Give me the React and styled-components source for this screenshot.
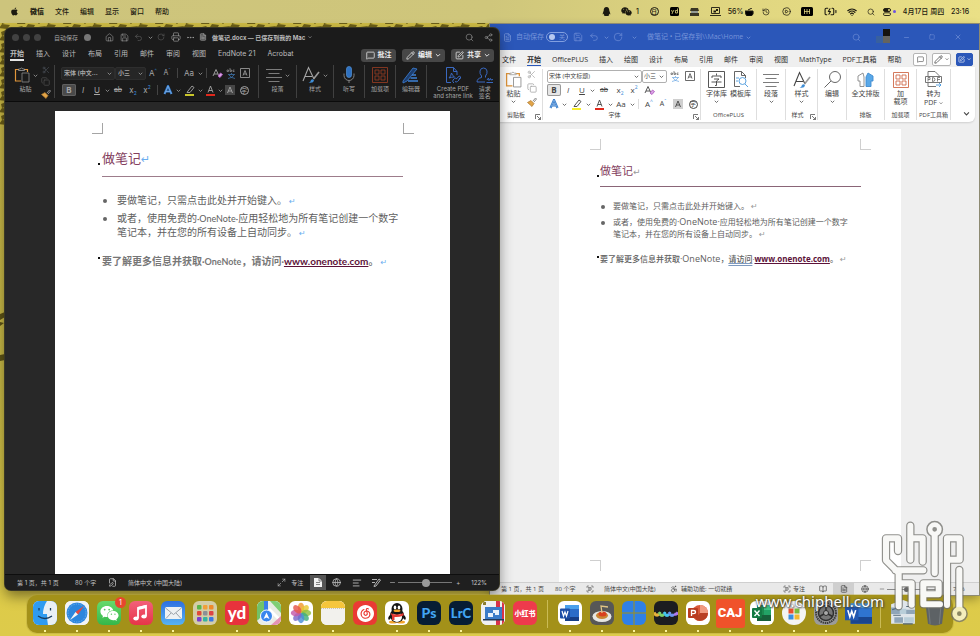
import React from 'react';
import styled, { createGlobalStyle, css } from 'styled-components';
import {
  House, Save, Undo2, RotateCw, Printer, Ellipsis, FileText, Search, Share2, MessageSquare, Pencil,
  Scissors, Copy, Globe, AlignLeft, Wifi, History, CirclePlay, BatteryCharging,
  Maximize2, SquarePen, BookOpen, Minus, Square, X, ScanText, Accessibility, FilePen,
} from 'lucide-react';
import { FaApple, FaQq, FaWeixin } from 'react-icons/fa';
import { SiNeteasecloudmusic } from 'react-icons/si';

const macFont = '"Inter", "Noto Sans CJK SC", sans-serif';
const winFont = '"Open Sans", "Noto Sans CJK SC", sans-serif';

const Global = createGlobalStyle`
  * { box-sizing: border-box; }
  body { margin: 0; font-family: ${macFont}; }
  button, select, input { font: inherit; color: inherit; margin: 0; padding: 0; border: 0; background: none; }
  svg { display: block; flex: none; }
`;

/* ---------- desktop ---------- */
const Desktop = styled.main`
  position: relative;
  min-height: 100vh;
  display: flex;
  flex-direction: column;
  justify-content: space-between;
  overflow: hidden;
  background: linear-gradient(180deg, #c9b84a 0%, #c8b945 60%, #decb48 92%, #ddcb4b 100%);
`;
const Wallpaper = styled.svg`
  position: absolute;
  inset: 0;
  width: 100%;
  height: 100%;
`;
const MenuBar = styled.header`
  position: relative;
  display: flex;
  align-items: center;
  justify-content: space-between;
  height: 23px;
  padding: 0 9px 0 10px;
  color: #1c1a10;
  background: linear-gradient(90deg, #cdc47c 0%, #cfc67b 50%, #e0d680 75%, #eae086 100%);
  font-size: 7px;
  font-weight: 500;
  line-height: 10px;
`;
const MenuList = styled.nav`
  display: flex;
  align-items: center;
  gap: 11px;
`;
const MenuItem = styled.button`
  white-space: nowrap;
  font-weight: ${(p) => (p.$strong ? 900 : 500)};
`;
const StatusIcons = styled.div`
  display: flex;
  align-items: center;
`;
const StatusSlot = styled.span`
  display: flex;
  align-items: center;
  justify-content: center;
  gap: 2px;
  width: ${(p) => p.$w || 20}px;
  white-space: nowrap;
`;

/* ---------- shared parts ---------- */
const Slot = styled.button`
  display: flex;
  align-items: center;
  justify-content: center;
  flex: none;
  width: ${(p) => p.$w || 14}px;
  height: 12px;
  border-radius: 2px;
  font-size: ${(p) => p.$size || 8}px;
  line-height: 10px;
  font-weight: ${(p) => (p.$bold ? 700 : 400)};
  ${(p) => p.$on && css`
    background: ${p.$on};
    box-shadow: inset 0 0 0 1px ${p.$edge};
  `}
`;
const Split = styled.span`
  flex: none;
  width: 1px;
  height: 10px;
  margin: 0 3px;
  background: ${(p) => p.$c};
`;
const Row = styled.div`
  display: flex;
  align-items: center;
  height: ${(p) => p.$h || 14}px;
  gap: ${(p) => p.$gap || 0}px;
`;
const Stack = styled.div`
  display: flex;
  flex-direction: column;
  align-items: center;
  gap: ${(p) => p.$gap || 0}px;
`;
const SelectBox = styled.span`
  display: flex;
  align-items: center;
  width: ${(p) => p.$w}px;
  height: 13px;
  padding: 0 2px 0 ${(p) => p.$pad || 1}px;
  background: ${(p) => p.$bg};
  border: 1px solid ${(p) => p.$edge};
  border-radius: 2px;
`;
const Picker = styled.select`
  appearance: none;
  flex: 1;
  min-width: 0;
  height: 10px;
  font-size: 6px;
  font-weight: ${(p) => (p.$bold ? 700 : 400)};
  line-height: 10px;
  outline: none;
`;
const Range = styled.input`
  appearance: none;
  width: ${(p) => p.$w}px;
  height: 10px;
  background: linear-gradient(${(p) => p.$track}, ${(p) => p.$track}) center / 100% 1px no-repeat;
  &::-webkit-slider-thumb {
    appearance: none;
    width: ${(p) => p.$thumb}px;
    height: ${(p) => p.$thumb}px;
    border-radius: 50%;
    background: ${(p) => p.$knob};
  }
`;

const Chevron = ({ s = 5 }) => (
  <svg width={s} height={s} viewBox="0 0 10 10" fill="none" stroke="currentColor" strokeWidth="1.5"><path d="M1.5 3.5 5 7l3.500-3.500" /></svg>
);
const ChevronSlot = ({ label }) => <Slot $w={6} aria-label={label}><Chevron /></Slot>;

const PasteIcon = ({ s = 16, paper }) => (
  <svg width={s} height={s} viewBox="0 0 16 16" fill="none">
    <path d="M5 2.500H1.500v11.500H7M10 2.500h3.500V5" stroke="#e0953a" strokeWidth="1.200" />
    <path d="M4.500 3.500V2h1.500q1.500-2 3 0h1.500v1.500z" stroke="#a0a0a0" strokeWidth=".8" />
    <path d="M8 6h7v9H8z" fill={paper} stroke="#8a8a8a" strokeWidth=".8" />
  </svg>
);
const BrushIcon = () => (
  <svg width="10" height="10" viewBox="0 0 10 10" fill="none">
    <path d="m6 4 2.500-3L9.500 2 7 5" stroke="#8d8d8d" />
    <path d="M4 3.500 7 6.500 5 9.500 .5 5.500z" fill="#e2a448" stroke="#a9752d" strokeWidth=".7" />
  </svg>
);
const LinesIcon = () => (
  <svg width="16" height="14" viewBox="0 0 16 14" stroke="currentColor" strokeWidth=".7"><path d="M0 1.500h16M2.500 5.500h11M0 9.500h16M2.500 13.500h11" /></svg>
);
const StyleIcon = () => (
  <svg width="18" height="18" viewBox="0 0 18 18" fill="none" stroke="currentColor" strokeWidth="1.100">
    <path d="M1 15 6.500 1.500 12 13M3 10.500h7" />
    <path d="M17 6 11.500 13" stroke="#9a9a9a" strokeWidth="1.600" />
    <path d="M6.500 16.500q2 0 2.500-2.500 2-1.500 3 .5-.500 3-5.500 2z" fill="#3f8ed6" stroke="none" />
  </svg>
);
const GridIcon = ({ c }) => (
  <svg width="16" height="16" viewBox="0 0 16 16" fill="none" stroke={c} strokeWidth=".9"><path d="M.5.5h15v15H.5z" /><path d="M3 3h4v4H3zM9 3h4v4H9zM3 9h4v4H3zM9 9h4v4H9z" /></svg>
);
const GlyphColor = ({ bar, children }) => (
  <svg width="11" height="11" viewBox="0 0 11 11" fill="none" stroke="currentColor" strokeWidth=".9">
    {children}
    <path d="M1 10h9" stroke={bar} strokeWidth="2" />
  </svg>
);
const FontColor = () => <GlyphColor bar="#e0281c"><path d="M3 7.500 5.500 1 8 7.500M3.800 5.500h3.400" /></GlyphColor>;
const Highlighter = ({ bar }) => <GlyphColor bar={bar}><path d="m4 6 4-5 2 1.500-4 5H3z" /></GlyphColor>;
const EffectA = () => (
  <svg width="10" height="10" viewBox="0 0 10 10" fill="none"><path d="M1.500 9 5 1l3.500 8M3 6.500h4" stroke="#3379c8" strokeWidth="2.200" /><path d="M1.500 9 5 1l3.500 8M3 6.500h4" stroke="#a9cdf2" strokeWidth=".5" /></svg>
);
const EraserA = () => (
  <svg width="11" height="11" viewBox="0 0 11 11" fill="none" stroke="currentColor" strokeWidth=".9"><path d="M1 8 4 1.500 7 8M2 6h4" /><path d="m6 8 2.500-3 2 1.500L8 9.500z" stroke="#b25cc4" fill="#d9a3e2" /></svg>
);
const BoxA = () => (
  <svg width="10" height="10" viewBox="0 0 10 10" fill="none" stroke="currentColor" strokeWidth=".8"><path d="M.5.5h9v9h-9zM3 7.500l2-5 2 5M3.600 6h2.800" /></svg>
);
const ShadeA = () => (
  <svg width="10" height="10" viewBox="0 0 10 10" fill="none"><path d="M0 0h10v10H0z" fill="#8886" /><path d="m2.500 8 2.500-6 2.500 6M3.400 6h3.200" stroke="currentColor" strokeWidth=".9" /></svg>
);
const Ringed = styled.span`
  width: 9px;
  height: 9px;
  border: 1px solid currentColor;
  border-radius: 50%;
  font-size: 6px;
  line-height: 7px;
  text-align: center;
`;
const Blue = styled.span`
  color: #3a88d8;
  font-size: 5px;
  align-self: ${(p) => (p.$low ? 'flex-end' : 'flex-start')};
  line-height: 6px;
`;
const Underlined = styled.u``;
const Struck = styled.s``;
const Phonetic = () => (
  <svg width="11" height="11" viewBox="0 0 11 11" fill="none" stroke="currentColor" strokeWidth=".6"><path d="M1 3.500V2h1.500v1.500H1M4 0v3.500h1.500V2H4M8.500 2H7v1.500h1.500" /><path d="M5.500 5v1M2 6.500h7M3 7q2 3 6 3.500M8 7q-2 3-6 3.500" stroke="#4a93dd" /></svg>
);

/* ---------- dark window ---------- */
const MacWindow = styled.section`
  position: absolute;
  z-index: 2;
  top: 28px;
  left: 5px;
  right: calc(50% - 9px);
  bottom: 46px;
  display: flex;
  flex-direction: column;
  overflow: hidden;
  border-radius: 6px;
  background: #1b1b1b;
  color: #bdbdbd;
  box-shadow: 0 0 0 1px #3a3826, 0 6px 14px #0007;
  font-family: ${macFont};
`;
const MacTitle = styled.div`
  display: flex;
  align-items: center;
  height: 18px;
  padding: 0 6px 0 7px;
  font-size: 6px;
  line-height: 9px;
  color: #a2a2a2;
  white-space: nowrap;
`;
const Light = styled.button`
  width: 7px;
  height: 7px;
  margin-right: 4px;
  border-radius: 50%;
  background: #414141;
`;
const AutoSave = styled.label`
  display: flex;
  align-items: center;
  gap: 6px;
  margin: 0 14px 0 9px;
`;
const AutoDot = styled.input`
  appearance: none;
  width: 7px;
  height: 7px;
  border-radius: 50%;
  background: #777 !important;
`;
const DocName = styled.h1`
  flex: 1;
  display: flex;
  align-items: center;
  gap: 3px;
  margin: 0;
  color: #bbb;
  font-size: 6px;
  font-weight: 700;
`;
const MacTabs = styled.div`
  display: flex;
  align-items: center;
  height: 18px;
  padding: 0 5px;
  gap: 6px;
`;
const TabList = styled.nav`
  flex: 1;
  display: flex;
  gap: ${(p) => p.$gap}px;
  padding-bottom: ${(p) => p.$lift || 0}px;
`;
const Tab = styled.button`
  flex: none;
  font-size: 7px;
  line-height: 11px;
  white-space: nowrap;
  font-weight: ${(p) => (p.$active ? 700 : 400)};
  box-shadow: ${(p) => (p.$active ? `0 ${p.$drop || 2}px 0 ${p.$active}` : 'none')};
`;
const Pill = styled.button`
  display: flex;
  align-items: center;
  justify-content: center;
  gap: 3px;
  width: ${(p) => p.$w}px;
  height: 13px;
  border-radius: 3px;
  background: #474747;
  color: #eee;
  font-size: 7px;
  font-weight: 700;
  line-height: 10px;
`;
const MacRibbon = styled.div`
  display: flex;
  height: 38px;
  padding: 1px 0 0 5px;
  border-bottom: 1px solid #0b0b0b;
  color: #a6a6a6;
  font-size: 6px;
  line-height: 7px;
`;
const MacGroup = styled.div`
  display: flex;
  flex: none;
  align-items: flex-start;
  justify-content: center;
  gap: 3px;
  width: ${(p) => p.$w}px;
  height: 33px;
  padding-top: 1px;
  border-right: 1px solid ${(p) => (p.$last ? 'transparent' : '#404040')};
`;
const BigButton = styled.button`
  display: flex;
  flex-direction: column;
  align-items: center;
  gap: 1px;
  font-size: 6px;
  line-height: 7px;
  white-space: nowrap;
`;
const BigIcon = styled.span`
  display: flex;
  align-items: center;
  justify-content: center;
  gap: 3px;
  height: 18px;
`;
const MacCanvas = styled.div`
  flex: 1;
  display: flex;
  min-height: 0;
  padding: 9px 49px 0 50px;
  background: #282828;
`;
const Status = styled.footer`
  display: flex;
  align-items: center;
  height: ${(p) => p.$h}px;
  padding: ${(p) => p.$pad};
  background: ${(p) => p.$bg};
  border-top: 1px solid ${(p) => p.$line};
  color: ${(p) => p.$c};
  font-size: 6px;
  line-height: 9px;
  white-space: nowrap;
`;
const StatusText = styled.span`
  flex: none;
  width: ${(p) => (p.$w ? `${p.$w}px` : 'auto')};
  ${(p) => p.$grow && 'flex: 1;'}
`;

/* ---------- documents ---------- */
const Page = styled.article`
  position: relative;
  flex: 1;
  min-width: 0;
  min-height: 0;
  padding: ${(p) => p.$pad};
  background: #fff;
  color: #606060;
  font-family: ${(p) => p.$font}, "Noto Sans CJK SC", sans-serif;
  font-size: ${(p) => p.$size}px;
  line-height: ${(p) => p.$lh}px;
`;
const Latin = styled.span`
  font-size: ${(p) => p.$size}px;
  line-height: 1;
`;
const Corner = styled.span`
  position: absolute;
  width: 11px;
  height: 11px;
  border: 0 solid ${(p) => p.$c};
  ${(p) => (p.$top ? `top: ${p.$top}px; border-bottom-width: 1px;` : `bottom: ${p.$bottom}px; border-top-width: 1px;`)}
  ${(p) => (p.$left ? `left: ${p.$left}px; border-right-width: 1px;` : `right: ${p.$right}px; border-left-width: 1px;`)}
`;
const Heading = styled.h2`
  position: relative;
  margin: 0;
  padding-bottom: ${(p) => p.$below}px;
  border-bottom: 1px solid ${(p) => p.$rule};
  color: #84405e;
  font-size: ${(p) => p.$size}px;
  font-weight: 400;
  line-height: 16px;
`;
const Marker = styled.span`
  position: absolute;
  left: ${(p) => p.$left || -4}px;
  top: ${(p) => p.$top}px;
  width: 2px;
  height: 2px;
  background: #111;
`;
const Return = styled.span`
  margin-left: ${(p) => p.$gap || 0}px;
  color: ${(p) => p.$c};
  font-family: "DejaVu Sans", sans-serif;
  font-size: ${(p) => p.$size || 8}px;
  font-weight: 400;
  line-height: 1;
`;
const Bullets = styled.ul`
  margin: ${(p) => p.$top}px 0 0;
  padding: 0 0 0 ${(p) => p.$indent}px;
  list-style: none;
`;
const Bullet = styled.li`
  position: relative;
  margin-bottom: ${(p) => p.$gap}px;
  white-space: nowrap;
  &::before {
    content: '';
    position: absolute;
    left: ${(p) => p.$dot}px;
    top: ${(p) => p.$dotTop || 5}px;
    width: 4px;
    height: 4px;
    border-radius: 50%;
    background: #666;
  }
`;
const Note = styled.p`
  position: relative;
  margin: ${(p) => p.$top}px 0 0;
  color: ${(p) => p.$c};
  font-weight: ${(p) => p.$weight};
  white-space: nowrap;
`;
const DocLink = styled.a`
  color: #5c1239;
  font-size: ${(p) => p.$size}px;
  font-weight: 700;
  text-decoration: underline;
`;
const Checked = styled.span`
  text-decoration: underline double #7e9ac0;
`;

/* ---------- light window ---------- */
const WinWindow = styled.section`
  position: absolute;
  z-index: 1;
  top: 24px;
  left: 50%;
  right: 1px;
  bottom: 41px;
  display: flex;
  flex-direction: column;
  background: #efefef;
  color: #444;
  box-shadow: 0 0 0 1px #8d8a72, 0 4px 10px #0005;
  font-family: ${winFont};
`;
const WinTitle = styled.div`
  display: flex;
  align-items: center;
  height: 26px;
  padding: 0 8px 0 9px;
  background: #2b57b9;
  color: #7694da;
  font-size: 7px;
  line-height: 10px;
  white-space: nowrap;
`;
const TitleSlot = styled.button`
  display: flex;
  justify-content: center;
  align-items: center;
  width: ${(p) => p.$w}px;
  height: 14px;
`;
const Switch = styled.label`
  display: flex;
  align-items: center;
  gap: 2px;
  margin-right: 2px;
`;
const SwitchTrack = styled.span`
  display: flex;
  align-items: center;
  gap: 4px;
  width: 22px;
  height: 10px;
  padding: 0 2px;
  border: 1px solid #829fe0;
  border-radius: 5px;
  font-size: 6px;
  line-height: 8px;
`;
const SwitchKnob = styled.input`
  appearance: none;
  width: 6px;
  height: 6px;
  border-radius: 50%;
  background: #b6c8f0 !important;
`;
const WinName = styled.h1`
  flex: 1;
  display: flex;
  align-items: center;
  gap: 3px;
  margin: 0 0 0 6px;
  font-size: 7px;
  font-weight: 400;
`;
const Avatar = styled.span`
  display: grid;
  grid-template-columns: 7px 7px;
  grid-template-rows: 7px 7px;
  margin: 0 3px 3px 15px;
  i:nth-child(1) { background: #2b57b9; }
  i:nth-child(2) { background: #15130f; }
  i:nth-child(3) { background: #38609f; }
  i:nth-child(4) { background: #64645f; }
`;
const WinTabs = styled.div`
  display: flex;
  align-items: center;
  height: 17px;
  padding: 1px 6px 0 12px;
  gap: 5px;
  color: #2b2b2b;
`;
const BoxButton = styled.button`
  display: flex;
  align-items: center;
  justify-content: center;
  gap: 2px;
  width: ${(p) => p.$w}px;
  height: 13px;
  border-radius: 2px;
  border: 1px solid ${(p) => (p.$blue ? '#2b57b9' : '#b5b5b5')};
  background: ${(p) => (p.$blue ? '#2b57b9' : '#fff')};
  color: ${(p) => (p.$blue ? '#fff' : '#444')};
`;
const WinRibbon = styled.div`
  display: flex;
  height: 55px;
  margin-right: 4px;
  padding: 2px 0;
  background: #fff;
  border-radius: 0 0 6px 0;
  box-shadow: 0 1px 2px #0002;
`;
const WinGroup = styled.fieldset`
  display: flex;
  flex-direction: column;
  flex: none;
  min-width: 0;
  width: ${(p) => p.$w}px;
  margin: 0;
  padding: 0 0 0 ${(p) => p.$pad || 0}px;
  border: 0;
  border-right: 1px solid #dedede;
`;
const WinBody = styled.div`
  flex: 1;
  display: flex;
  justify-content: center;
  gap: ${(p) => p.$gap || 0}px;
  padding-top: 1px;
`;
const WinLabel = styled.div`
  position: relative;
  display: flex;
  align-items: center;
  justify-content: center;
  height: 9px;
  padding-right: ${(p) => p.$shift || 0}px;
  font-size: 6px;
  line-height: 9px;
  white-space: nowrap;
`;
const Launcher = styled.button`
  position: absolute;
  right: 1px;
  top: 3px;
`;
const WinBig = styled.button`
  display: flex;
  flex-direction: column;
  align-items: center;
  align-self: flex-start;
  gap: 1px;
  min-width: 20px;
  font-size: 7px;
  line-height: 8px;
  white-space: nowrap;
`;
const WinIcon = styled.span`
  display: flex;
  align-items: center;
  justify-content: center;
  height: 19px;
`;
const Collapse = styled.button`
  align-self: flex-end;
  margin: 0 5px 3px auto;
`;
const WinCanvas = styled.div`
  flex: 1;
  display: flex;
  min-height: 0;
  padding: 7px 78px 0 69px;
`;
const ViewButton = styled.button`
  display: flex;
  align-items: center;
  justify-content: center;
  align-self: stretch;
  width: ${(p) => p.$w}px;
  background: ${(p) => p.$on || 'transparent'};
`;

/* ---------- dock ---------- */
const Dock = styled.nav`
  position: relative;
  z-index: 3;
  display: flex;
  align-self: center;
  height: 38px;
  margin-bottom: 3px;
  padding: 0 2px;
  border-radius: 10px;
  background: #a39119;
  box-shadow: 0 0 0 1px #b7a63b66;
`;
const DockItem = styled.button`
  position: relative;
  display: flex;
  flex-direction: column;
  align-items: center;
  justify-content: center;
  width: 32px;
  height: 36px;
  &::after {
    content: '';
    position: absolute;
    left: 15px;
    bottom: -1px;
    width: 2px;
    height: 2px;
    background: ${(p) => (p.$running ? '#fbf39a' : 'transparent')};
  }
`;
const DockLine = styled.span`
  width: 1px;
  height: 28px;
  margin: 5px 6px;
  background: #cabb55;
`;
const Tile = styled.span`
  display: flex;
  align-items: center;
  justify-content: center;
  width: ${(p) => p.$w || 24}px;
  height: ${(p) => p.$w || 24}px;
  border-radius: ${(p) => (p.$w ? 3 : 6)}px;
  background: ${(p) => p.$bg};
  color: ${(p) => p.$c || '#fff'};
  font-family: ${(p) => p.$f || 'Lato'}, "Noto Sans CJK SC", sans-serif;
  font-size: ${(p) => p.$size || 13}px;
  font-weight: 900;
  line-height: 18px;
  overflow: hidden;
`;
const Badge = styled.span`
  position: absolute;
  top: 2px;
  right: -1px;
  width: 11px;
  height: 11px;
  border-radius: 50%;
  background: #e8452f;
  color: #fff;
  font-size: 7px;
  line-height: 11px;
  text-align: center;
`;
const Site = styled.span`
  position: absolute;
  z-index: 5;
  right: 96px;
  bottom: 25px;
  color: #fff;
  font: 15px/20px "Noto Sans", sans-serif;
  text-shadow: 0 0 2px #333, 1px 1px 2px #444;
`;
const Logo = styled.svg`
  position: absolute;
  z-index: 4;
  right: 0;
  bottom: 0;
`;

const Art = ({ children, w = 24 }) => <svg width={w} height={w} viewBox="0 0 24 24">{children}</svg>;

const art = {
  finder: <Art><path d="M0 0h24v24H0z" fill="#e9eff4" /><path d="M0 0h14q-4 6-4 13h4q0 6 1 11H0z" fill="#2f9bf0" /><path d="M6 7v2.500M17.500 7v2.500M5 15q7 5 14 0" stroke="#173a5c" fill="none" strokeWidth="1.300" /></Art>,
  safari: <Art><path d="M0 0h24v24H0z" fill="#f1f3f5" /><circle cx="12" cy="12" r="10.500" fill="#2c86dd" /><circle cx="12" cy="12" r="9" fill="none" stroke="#8fc4f3" strokeWidth="1" strokeDasharray=".6 1.200" /><path d="m19 5-6 8.500-2.500-2.500z" fill="#e8483c" /><path d="m5 19 8-5.500-2.500-2.500z" fill="#f6f6f6" /></Art>,
  wechat: <FaWeixin size={19} />,
  music: <Art><path d="M9 17V7l8-2v10" fill="none" stroke="#fff" strokeWidth="1.800" /><path d="M9 7.500 17 5.500" stroke="#fff" strokeWidth="3" /><ellipse cx="7" cy="17.500" rx="2.700" ry="2" fill="#fff" /><ellipse cx="15" cy="15.500" rx="2.700" ry="2" fill="#fff" /></Art>,
  mail: <Art><rect x="4" y="6" width="17" height="12" rx="1.500" fill="#eef1f3" /><path d="m4.500 7 8 6.500L20.500 7M5 17.500l5-5.500M20 17.500 15 12" stroke="#9aa1a8" fill="none" /></Art>,
  launch: <Art>{['#58b64c', '#f0a03a', '#f08a2c', '#e04a3a', '#8a9096', '#d44', '#7a3fd0', '#36b4a0', '#3c78e0'].map((c, i) => <rect key={c} x={4 + (i % 3) * 6} y={4 + Math.floor(i / 3) * 6} width="4.500" height="4.500" rx="1" fill={c} />)}</Art>,
  maps: <Art><path d="M0 0h24v24H0z" fill="#e9ebe4" /><path d="M0 0h8v12L0 20z" fill="#72c267" /><path d="M13 0h11v12z" fill="#7fce75" /><path d="M12 8 24 20" stroke="#fff" strokeWidth="3" /><path d="m14 24 10-9v9z" fill="#e493b4" /><path d="M7 0h4v10H7z" fill="#3a7de8" /><circle cx="9.500" cy="15" r="6" fill="#3a86ee" stroke="#fff" /><path d="m9.500 11.500 3 6.500-3-1.500-3 1.500z" fill="#fff" /></Art>,
  photos: <Art>{['#f29a2e', '#e8c832', '#8fc040', '#3fae7c', '#4a8fd8', '#7a68c8', '#c45aa8', '#e5574a'].map((c, i) => <ellipse key={c} cx="12" cy="6.800" rx="3.200" ry="5" fill={c} opacity=".82" transform={`rotate(${i * 45} 12 12)`} />)}</Art>,
  notes: <Art><path d="M0 0h24v24H0z" fill="#f2f1ed" /><path d="M0 0h24v7H0z" fill="#f6c63c" /><path d="M0 7.500h24" stroke="#c9c4b4" strokeDasharray="1 1" /></Art>,
  netease: <SiNeteasecloudmusic size={17} />,
  qq: <Art><ellipse cx="8" cy="21" rx="4" ry="1.500" fill="#f2a42c" /><ellipse cx="16" cy="21" rx="4" ry="1.500" fill="#f2a42c" /><path d="M5 14Q2 17 4 19l3-3M19 14q3 3 1 5l-3-3" fill="#111" /><ellipse cx="12" cy="14.500" rx="7" ry="7" fill="#161616" /><ellipse cx="12" cy="16" rx="5" ry="5" fill="#fff" /><ellipse cx="12" cy="8" rx="5.500" ry="6" fill="#161616" /><ellipse cx="10" cy="6.500" rx="1.300" ry="1.900" fill="#fff" /><ellipse cx="14" cy="6.500" rx="1.300" ry="1.900" fill="#fff" /><ellipse cx="12" cy="9.800" rx="3.500" ry="1.200" fill="#f2a42c" /><path d="M5.500 12q6.500 3 13 0v2.500q-5 2-9 1.500v3H7v-4z" fill="#e43a34" /></Art>,
  parallels: <Art><path d="M0 0h24v24H0z" fill="#f0f0f0" /><path d="M15 0h4v24h-4zM21 0h2v24h-2z" fill="#d8334a" /><path d="M4 6h17v12H4z" fill="#3b7cc8" /><path d="M2 18h21v1.500H2z" fill="#203a5c" /><path d="M7 12h5v4H7zM12 9h6v5h-4v-2h-2z" fill="#e8f2fc" /><path d="M2 1h3v3H2z" fill="#8a7c30" /></Art>,
  word: <Art><path d="M7 4h14v16H7z" fill="#2b6cc8" /><path d="M7 4h14v4H7z" fill="#4aa0ec" /><path d="M7 16h14v4H7z" fill="#163e86" /><rect x="2" y="7.500" width="10" height="10" rx="1" fill="#1f4fa6" /><path d="m4 10 1.500 5L7 11l1.500 4L10 10" stroke="#fff" fill="none" strokeWidth="1.200" /></Art>,
  pasta: <Art><ellipse cx="12" cy="15.500" rx="9.500" ry="5.500" fill="#e6e6e2" /><ellipse cx="12" cy="14.500" rx="6" ry="3.500" fill="#c98534" /><ellipse cx="12.500" cy="13" rx="4" ry="2.500" fill="#d8401f" /><path d="m12 12-1-7 7 1" stroke="#e0c486" fill="none" strokeWidth="1.300" /></Art>,
  windows: <Art><path d="M0 0h11.500v11.500H0zM12.500 0H24v11.500H12.500zM0 12.500h11.500V24H0zM12.500 12.500H24V24H12.500z" fill="#2f80e6" /></Art>,
  waves: <Art><g fill="none" strokeWidth="3"><path d="M0 11.500q2.500 4.500 5 1.500" stroke="#e8b23c" /><path d="M5 13q1-2 1 0 2 3 4 0" stroke="#7ed06a" /><path d="M10 13q1-2 1 0 2 3 4 0" stroke="#45c4f0" /><path d="M15 13q1-2 1 0 2 3 4 0" stroke="#6a94f0" /><path d="M20 13q2 1 4-1.500" stroke="#b07af0" /></g></Art>,
  ppt: <Art><circle cx="14" cy="12" r="8" fill="#d9593a" /><path d="M14 4a8 8 0 0 1 8 8h-8z" fill="#f09a80" /><path d="M22 12a8 8 0 0 1-13 6l5-6z" fill="#b83f24" /><rect x="2" y="7" width="10" height="10" rx="1" fill="#b93b20" /><path d="M5.500 15V9.500h2q2 0 2 1.600t-2 1.600h-2" stroke="#fff" fill="none" strokeWidth="1.300" /></Art>,
  excel: <Art><path d="M7 4h7v16H7z" fill="#1d8a50" /><path d="M14 4h7v5h-7z" fill="#3fc585" /><path d="M14 9h7v5h-7z" fill="#23a366" /><path d="M7 14h14v6H7z" fill="#17603a" /><rect x="2" y="7" width="10" height="10" rx="1" fill="#127a43" /><path d="m4.500 9.500 5 5.500M9.500 9.500 4.500 15" stroke="#fff" strokeWidth="1.400" /></Art>,
  store: <Art><circle cx="12" cy="12" r="12" fill="#f4f4f4" /><path d="M6.500 7.500H11.500V12.500H6.500z" fill="#e8502f" /><path d="M12.500 7.500h5v5h-5z" fill="#7cba3c" /><path d="M6.500 13.500h5v5h-5z" fill="#3a8ee0" /><path d="M12.500 13.500h5v5h-5z" fill="#f2b830" /></Art>,
  settings: <Art><circle cx="12" cy="12" r="10" fill="none" stroke="#3b3b3b" strokeWidth="2" strokeDasharray="1.500 .7" /><circle cx="12" cy="12" r="7.500" fill="#777" stroke="#2f2f2f" strokeWidth="1.500" /><circle cx="12" cy="12" r="2.500" fill="#aaa" stroke="#2f2f2f" /><path d="M12 4.500v5M5.500 15.500 10 13M18.500 15.500 14 13" stroke="#2f2f2f" strokeWidth="1.500" /></Art>,
  wordWin: <Art w={27}><path d="M5 3h19v18H5z" fill="#2f74d0" /><path d="M5 3h19v4H5z" fill="#4c9be8" /><path d="M5 15h19v6H5z" fill="#1a458e" /><path d="M0 6h12v12H0z" fill="#2257b0" /><path d="m2.500 9 1.800 6L6 10l1.700 5 1.800-6" stroke="#fff" fill="none" strokeWidth="1.400" /></Art>,
  files: <Art w={26}><path d="M1 4 12 0l11 4v18H1z" fill="#dfe5ea" /><path d="M1 7h9v6H1zM14 9h9v4h-9zM4 16h8v5H4z" fill="#8fa5b8" /><path d="M9 8h6v5H9zM13 16h9v5h-9z" fill="#b9ced9" /><path d="M3 14h7M15 6h6M12 22h9M2 9l6-2" stroke="#51677a" /></Art>,
  trash: <Art w={26}><path d="M3 2h18l-2.500 20q-6.500 3-13 0z" fill="#5d6265" /><ellipse cx="12" cy="2.500" rx="9" ry="2" fill="#44484b" /><path d="m6 5 1.500 17M17.500 5 16 22" stroke="#757b7e" /></Art>,
};

const leftApps = [
  ['访达', '#2f9bf0', art.finder, 1], ['Safari', '#fff', art.safari, 1],
  ['微信', 'linear-gradient(#67d96c,#35b74a)', art.wechat, 1], ['音乐', 'linear-gradient(#f2607a,#e63548)', art.music, 1],
  ['邮件', 'linear-gradient(#2e6fe0,#57b3f3)', art.mail, 1], ['启动台', '#d3cda8', art.launch, 0],
  ['有道', '#e8323c', 'yd', 1], ['地图', '#eee', art.maps, 1], ['照片', '#fff', art.photos, 0],
  ['备忘录', '#fff', art.notes, 1], ['网易云音乐', '#ea3a34', art.netease, 0], ['QQ', '#fff', art.qq, 1],
  ['Photoshop', '#071d34', 'Ps', 1, '#42a5f5'], ['Lightroom Classic', '#071d34', 'LrC', 1, '#42a5f5'],
  ['Parallels', '#fff', art.parallels, 0], ['小红书', '#ee3a4c', '小红书', 0],
];
const rightApps = [
  ['Word', '#fff', art.word, 1], ['Pasta', '#575757', art.pasta, 1], ['Windows', 'transparent', art.windows, 1],
  ['Waves', '#1c1d20', art.waves, 1], ['PowerPoint', '#fff', art.ppt, 1], ['CAJ', '#f0522a', 'CAJ', 1],
  ['Excel', '#fff', art.excel, 1], ['Store', 'transparent', art.store, 1], ['设置', '#9b9b9b', art.settings, 1],
  ['Word Windows', 'transparent', art.wordWin, 1],
];
const tileSize = { yd: 17, Ps: 14, LrC: 13, CAJ: 13, 小红书: 7 };
const DockApp = ({ app: [name, bg, content, running, c] }) => (
  <DockItem aria-label={name} $running={running}>
    <Tile $bg={bg} $c={c} $size={tileSize[content]} $w={content === 'CAJ' ? 29 : name === 'Word Windows' ? 27 : undefined} $f={content === 'CAJ' ? 'Roboto' : undefined}>{content}</Tile>
    {name === '微信' && <Badge>1</Badge>}
  </DockItem>
);

function MacWord() {
  return (
    <MacWindow>
      <MacTitle>
        <Light aria-label="关闭" /><Light aria-label="最小化" /><Light aria-label="缩放" />
        <AutoSave>自动保存<AutoDot type="checkbox" /></AutoSave>
        <Row $gap={6}><House size={9} strokeWidth={1.5} /><Save size={9} strokeWidth={1.5} /></Row>
        <Slot $w={18}><Undo2 size={9} color="#555" /></Slot><ChevronSlot label="撤销选项" />
        <Slot $w={15}><RotateCw size={8} color="#555" /></Slot>
        <Slot $w={15}><Printer size={10} strokeWidth={1.500} /></Slot>
        <Slot $w={14}><Ellipsis size={9} /></Slot>
        <DocName><Slot $w={12}><FileText size={8} fill="#555" strokeWidth={1.5} /></Slot>做笔记.docx — 已保存到我的 Mac<Chevron s={4} /></DocName>
        <Row $gap={10}><Search size={9} strokeWidth={1.5} /><Share2 size={9} strokeWidth={1.5} /></Row>
      </MacTitle>
      <MacTabs>
        <TabList $gap={12} $lift={3}>
          <Tab $active="#e6e6e6">开始</Tab>
          {['插入', '设计', '布局', '引用', '邮件', '审阅', '视图', 'EndNote 21', 'Acrobat'].map((t) => <Tab key={t}>{t}</Tab>)}
        </TabList>
        <Pill $w={35}><MessageSquare size={9} />批注</Pill>
        <Pill $w={43}><Pencil size={9} />编辑<Chevron s={6} /></Pill>
        <Pill $w={43}><SquarePen size={9} />共享<Chevron s={6} /></Pill>
      </MacTabs>
      <MacRibbon>
        <MacGroup $w={45}>
          <BigButton><BigIcon><PasteIcon paper="#1b1b1b" /><Chevron /></BigIcon>粘贴</BigButton>
          <Stack $gap={3}><Scissors size={8} color="#4a5058" /><Copy size={9} color="#4d4d4d" /><BrushIcon /></Stack>
        </MacGroup>
        <MacGroup $w={204}>
          <Stack $gap={3}>
            <Row>
              <SelectBox $w={54} $bg="#262626" $edge="#2e2e2e" $pad={2}><Picker $bold aria-label="字体"><option>宋体 (中文...</option></Picker><Chevron /></SelectBox>
              <SelectBox $w={31} $bg="#262626" $edge="#2e2e2e" $pad={2}><Picker $bold aria-label="字号"><option>小三</option></Picker><Chevron /></SelectBox>
              <Slot>A<Blue>^</Blue></Slot><Slot $size={7}>A<Blue>ˇ</Blue></Slot><Split $c="#444" />
              <Slot $w={16}>Aa</Slot><ChevronSlot label="大小写" /><Split $c="#444" />
              <Slot><EraserA /></Slot><Slot><Phonetic /></Slot><Slot><BoxA /></Slot>
            </Row>
            <Row>
              <Slot $bold $on="#4a4a4a" $edge="#606060">B</Slot><Slot><i>I</i></Slot><Slot><Underlined>U</Underlined></Slot><ChevronSlot label="下划线" />
              <Slot $w={16} $size={7}><Struck>ab</Struck></Slot><Slot>x<Blue $low>2</Blue></Slot><Slot>x<Blue>2</Blue></Slot><Split $c="#444" />
              <Slot><EffectA /></Slot><ChevronSlot label="文本效果" />
              <Slot $w={16}><Highlighter bar="#c9c62a" /></Slot><ChevronSlot label="突出显示" />
              <Slot><FontColor /></Slot><ChevronSlot label="字体颜色" /><Slot><ShadeA /></Slot><Slot><Ringed>字</Ringed></Slot>
            </Row>
          </Stack>
        </MacGroup>
        <MacGroup $w={38}><BigButton><BigIcon><LinesIcon /><Chevron /></BigIcon>段落</BigButton></MacGroup>
        <MacGroup $w={37}><BigButton><BigIcon><StyleIcon /><Chevron /></BigIcon>样式</BigButton></MacGroup>
        <MacGroup $w={31}><BigButton><BigIcon>
          <svg width="12" height="18" viewBox="0 0 12 18" fill="none" stroke="#8a8a8a"><path d="M1 7.500v2a5 5 0 0 0 10 0v-2M6 14.500V17" strokeWidth=".9" /><rect x="3.500" y=".5" width="5" height="11" rx="2.500" fill="#2f71c0" stroke="#5390d4" strokeWidth=".7" /></svg>
        </BigIcon>听写</BigButton></MacGroup>
        <MacGroup $w={31}><BigButton><BigIcon><GridIcon c="#8f3a22" /></BigIcon>加载项</BigButton></MacGroup>
        <MacGroup $w={31}><BigButton><BigIcon>
          <svg width="17" height="17" viewBox="0 0 17 17" fill="none" stroke="#3f82d8" strokeWidth=".8"><path d="M1 14 11 1l4 1L5 14l-4 2z" fill="#1d3f70" /><path d="M10 8h4M8.500 11h6.500M6 14h10" strokeWidth="1.600" /></svg>
        </BigIcon>编辑器</BigButton></MacGroup>
        <MacGroup $w={74} $last>
          <BigButton><BigIcon>
            <svg width="16" height="17" viewBox="0 0 16 17" fill="none" stroke="#3a69c0" strokeWidth="1"><path d="M6 15.500H1.500V.5h7l3.500 4V8M8.500.5v4H12M4 11q2-2 2.500-5 1 3 3 4-3 0-5.500 1z" /><path d="m8 13 1.500-1.500q1.500-1 2.500.5M15 11l-1.500 1.500M9 16q-2-1-1-3M12 11.500l1.500-2q1.500-1 2 .5t-1 2.500l-2 2q-1.500 1-2.500 0" /></svg>
          </BigIcon><span>Create PDF<br />and share link</span></BigButton>
          <BigButton><BigIcon>
            <svg width="18" height="16" viewBox="0 0 18 16" fill="none" stroke="#3a69c0" strokeWidth="1"><path d="M5.500 9Q3.500 6.500 4 4q.500-3 3.500-3T11 4q.500 2.500-1.500 5v1.500M5.500 9v1.500Q1 11.500 1 15h8" /><path d="m11 13 1.500-2 .5 2.500 1.500-2 .5 1.500 2-.5M10.500 15.500H17" /></svg>
          </BigIcon><span>请求<br />签名</span></BigButton>
        </MacGroup>
      </MacRibbon>
      <MacCanvas>
        <Page $pad="39px 47px 0" $size={10} $lh={14} $font="Lato">
          <Corner $c="#a5a5a5" $top={12} $left={37} /><Corner $c="#a5a5a5" $top={12} $right={36} />
          <Heading $size={13} $below={10} $rule="#9d7c8b"><Marker $top={13} />做笔记<Return $c="#6aaef0" $size={11}>↵</Return></Heading>
          <Bullets $top={16} $indent={15}>
            <Bullet $gap={4} $dot={-14} $dotTop={6}>要做笔记，只需点击此处并开始键入。<Return $c="#6aaef0" $gap={2}>↵</Return></Bullet>
            <Bullet $gap={0} $dot={-14} $dotTop={6}>或者，使用免费的<Latin $size={9}>·OneNote·</Latin>应用轻松地为所有笔记创建一个数字<br />笔记本，并在您的所有设备上自动同步。<Return $c="#6aaef0" $gap={2}>↵</Return></Bullet>
          </Bullets>
          <Note $top={15} $weight={700} $c="#777"><Marker $top={3} />要了解更多信息并获取<Latin $size={9}>·OneNote</Latin>，请访问<Latin $size={9}>·</Latin><DocLink $size={10} href="#onenote">www.onenote.com</DocLink>。<Return $c="#6aaef0" $gap={2}>↵</Return></Note>
        </Page>
      </MacCanvas>
      <Status $h={16} $pad="0 12px" $bg="#1f1f1f" $line="#0e0e0e" $c="#c4c4c4">
        <StatusText $w={58}>第 1 页，共 1 页</StatusText><StatusText $w={33}>80 个字</StatusText>
        <StatusText $w={20}><FilePen size={9} /></StatusText><StatusText $grow>简体中文 (中国大陆)</StatusText>
        <Row $gap={5}><Maximize2 size={9} strokeWidth={1.5} />专注</Row>
        <Split $c="transparent" />
        <ViewButton $w={16} $on="#555" aria-label="页面视图"><svg width="8" height="9" viewBox="0 0 8 9"><path d="M0 0h5l3 3v6H0z" fill="#f2f2f2" /><path d="M2 4.500h4M2 6.500h4M5 0v3h3" stroke="#555" fill="none" strokeWidth=".7" /></svg></ViewButton>
        <ViewButton $w={21} aria-label="Web"><Globe size={9} /></ViewButton>
        <ViewButton $w={19} aria-label="大纲"><AlignLeft size={10} /></ViewButton>
        <ViewButton $w={20} aria-label="草稿"><svg width="9" height="9" viewBox="0 0 9 9" fill="none" stroke="currentColor" strokeWidth=".9"><path d="M0 1.500h5M0 4.500h3M2 8 7 1l1.500 1L4 8l-2 .5z" /></svg></ViewButton>
        <ViewButton $w={12} aria-label="缩小"><Minus size={7} /></ViewButton>
        <Range $w={54} $thumb={8} $track="#777" $knob="#9a9a9a" type="range" defaultValue="52" aria-label="缩放" />
        <ViewButton $w={12}>+</ViewButton>
        <Split $c="transparent" />122%
      </Status>
    </MacWindow>
  );
}

const LaunchIcon = () => <svg width="6" height="6" viewBox="0 0 6 6" fill="none" stroke="#555" strokeWidth=".8"><path d="M.5 5V.5H5M2 2l3.500 3.500M5.500 3v2.500H3" /></svg>;

function WinWord() {
  return (
    <WinWindow>
      <WinTitle>
        <TitleSlot $w={17}><FileText size={9} /></TitleSlot>
        <Switch>自动保存<SwitchTrack><SwitchKnob type="checkbox" />关</SwitchTrack></Switch>
        <TitleSlot $w={15}><Save size={10} strokeWidth={1.5} /></TitleSlot>
        <TitleSlot $w={18}><Undo2 size={10} strokeWidth={1.5} /></TitleSlot><TitleSlot $w={6}><Chevron /></TitleSlot>
        <TitleSlot $w={18}><RotateCw size={10} strokeWidth={1.5} /></TitleSlot>
        <TitleSlot $w={14}><Chevron /></TitleSlot>
        <WinName>做笔记 • 已保存到\\Mac\Home<Chevron /></WinName>
        <Search size={9} strokeWidth={1.5} />
        <Avatar><i /><i /><i /><i /></Avatar>
        <TitleSlot $w={26}><Minus size={7} /></TitleSlot><TitleSlot $w={26}><Square size={6} /></TitleSlot><TitleSlot $w={26}><X size={8} /></TitleSlot>
      </WinTitle>
      <WinTabs>
        <TabList $gap={11}>
          {['文件', '开始', 'OfficePLUS', '插入', '绘图', '设计', '布局', '引用', '邮件', '审阅', '视图', 'MathType', 'PDF工具箱', '帮助'].map((t) => (
            <Tab key={t} $active={t === '开始' && '#2b57b9'} $drop={1}>{t}</Tab>
          ))}
        </TabList>
        <BoxButton $w={14} aria-label="批注"><MessageSquare size={7} /></BoxButton>
        <BoxButton $w={19} aria-label="编辑"><Pencil size={9} /><Chevron s={4} /></BoxButton>
        <BoxButton $w={17} $blue aria-label="共享"><SquarePen size={7} /><Chevron s={4} /></BoxButton>
      </WinTabs>
      <WinRibbon>
        <WinGroup $w={53} $pad={8}>
          <WinBody $gap={3}>
            <WinBig><WinIcon><PasteIcon s={17} paper="#fff" /></WinIcon>粘贴<Chevron /></WinBig>
            <Stack $gap={4}><Scissors size={9} color="#aaa" /><Copy size={10} color="#aaa" /><BrushIcon /></Stack>
          </WinBody>
          <WinLabel $shift={8}>剪贴板<Launcher aria-label="剪贴板"><LaunchIcon /></Launcher></WinLabel>
        </WinGroup>
        <WinGroup $w={158} $pad={4}>
          <Row>
            <SelectBox $w={95} $bg="#fff" $edge="#b0b0b0"><Picker aria-label="字体"><option>宋体 (中文标题)</option></Picker><Chevron /></SelectBox>
            <SelectBox $w={25} $bg="#fff" $edge="#b0b0b0"><Picker aria-label="字号"><option>小三</option></Picker><Chevron /></SelectBox>
            <Slot $w={16}><Phonetic /></Slot><Slot><BoxA /></Slot>
          </Row>
          <Row>
            <Slot $bold $on="#e6e6e6" $edge="#999">B</Slot><Slot><i>I</i></Slot><Slot><Underlined>U</Underlined></Slot><ChevronSlot label="下划线" />
            <Slot $w={18} $size={7}><Struck>ab</Struck></Slot><Slot>x<Blue $low>2</Blue></Slot><Slot>x<Blue>2</Blue></Slot><Slot $w={16}><EraserA /></Slot>
          </Row>
          <Row>
            <Slot><EffectA /></Slot><ChevronSlot label="文本效果" /><Slot $w={18}><Highlighter bar="#f7ee2c" /></Slot><ChevronSlot label="突出显示" />
            <Slot $w={16}><FontColor /></Slot><ChevronSlot label="字体颜色" /><Slot $w={16}>Aa</Slot><ChevronSlot label="大小写" /><Split $c="#ddd" />
            <Slot>A<Blue>^</Blue></Slot><Slot $size={7}>A<Blue>ˇ</Blue></Slot><Slot $w={16}><ShadeA /></Slot><Slot><Ringed>字</Ringed></Slot>
          </Row>
          <WinLabel $shift={18}>字体<Launcher aria-label="字体"><LaunchIcon /></Launcher></WinLabel>
        </WinGroup>
        <WinGroup $w={56}>
          <WinBody $gap={3}>
            <WinBig><WinIcon>
              <svg width="17" height="17" viewBox="0 0 17 17" fill="none" stroke="#444" strokeWidth=".9"><path d="M.5.500h16v16H.5z" /><path d="M8.500 2.500v2M4 7V5h9v2M6 8h5L8.500 10v4.500H7M3.500 11h10" /></svg>
            </WinIcon>字体库<Chevron /></WinBig>
            <WinBig><WinIcon>
              <svg width="16" height="17" viewBox="0 0 16 17" fill="none" stroke="#555" strokeWidth=".9"><path d="M7 15.500H1.500V.5h7l4 4V7M8.500.5v4h4" /><circle cx="9.500" cy="10" r="3.500" stroke="#4a98dc" /><path d="m12 13 3 3M3 7h3M3 10h2" stroke="#4a98dc" /></svg>
            </WinIcon>模板库</WinBig>
          </WinBody>
          <WinLabel>OfficePLUS</WinLabel>
        </WinGroup>
        <WinGroup $w={29}><WinBody><WinBig><WinIcon><LinesIcon /></WinIcon>段落<Chevron /></WinBig></WinBody></WinGroup>
        <WinGroup $w={32}><WinBody><WinBig><WinIcon><StyleIcon /></WinIcon>样式<Chevron /></WinBig></WinBody><WinLabel $shift={8}>样式<Launcher aria-label="样式"><LaunchIcon /></Launcher></WinLabel></WinGroup>
        <WinGroup $w={29}><WinBody><WinBig><WinIcon>
          <svg width="17" height="17" viewBox="0 0 17 17" fill="none" stroke="#555" strokeWidth=".9"><circle cx="11" cy="6" r="5.500" /><path d="m7 10-6.500 6.500" /></svg>
        </WinIcon>编辑<Chevron /></WinBig></WinBody></WinGroup>
        <WinGroup $w={38}><WinBody><WinBig><WinIcon>
          <svg width="17" height="16" viewBox="0 0 17 16" fill="none" stroke="#888" strokeWidth=".9"><path d="M6 1 1 4v5h2v5.500h4V5z" /><path d="m9 5 2-4 5 3v5h-2v5.500H9z" fill="#59a8e8" stroke="#3f8bd0" /></svg>
        </WinIcon>全文排版</WinBig></WinBody><WinLabel>排版</WinLabel></WinGroup>
        <WinGroup $w={32}><WinBody><WinBig><WinIcon><GridIcon c="#d06a4a" /></WinIcon><span>加<br />载项</span></WinBig></WinBody><WinLabel>加载项</WinLabel></WinGroup>
        <WinGroup $w={34}><WinBody><WinBig><WinIcon>
          <svg width="18" height="17" viewBox="0 0 18 17" fill="none" stroke="#666" strokeWidth=".9"><path d="M3 5V.5h7l4 4V5M3 12v3.500h8" /><path d="M.5 5.500h16v6H.5z" /><path d="M3 10.500v-4h2v2H3M7.500 6.500v4q2.500 0 2.500-2t-2.500-2M12.500 10.500v-4h2.500M12.500 8.500H15" strokeWidth=".8" /><path d="M11 14h5m-2-2 2 2-2 2" stroke="#4a98dc" /></svg>
        </WinIcon><span>转为</span><Row $h={8} $gap={2}>PDF<Chevron s={4} /></Row></WinBig></WinBody><WinLabel>PDF工具箱</WinLabel></WinGroup>
        <Collapse aria-label="折叠功能区"><Chevron s={7} /></Collapse>
      </WinRibbon>
      <WinCanvas>
        <Page $pad="34px 40px 0 41px" $size={8} $lh={12} $font={'"Open Sans"'}>
          <Corner $c="#cfcfcf" $top={10} $left={31} /><Corner $c="#cfcfcf" $top={10} $right={30} />
          <Corner $c="#cfcfcf" $bottom={11} $left={31} /><Corner $c="#cfcfcf" $bottom={11} $right={30} />
          <Heading $size={11} $below={7} $rule="#8a6577"><Marker $top={12} $left={-3} />做笔记<Return $c="#999" $size={9}>↵</Return></Heading>
          <Bullets $top={13} $indent={13}>
            <Bullet $gap={4} $dot={-12}>要做笔记，只需点击此处并开始键入。<Return $c="#999" $gap={2}>↵</Return></Bullet>
            <Bullet $gap={0} $dot={-12}>或者，使用免费的<Latin $size={9}>·OneNote·</Latin>应用轻松地为所有笔记创建一个数字<br />笔记本，并在您的所有设备上自动同步。<Return $c="#999" $gap={2}>↵</Return></Bullet>
          </Bullets>
          <Note $top={13} $weight={500} $c="#606060"><Marker $top={3} $left={-3} />要了解更多信息并获取<Latin $size={9}>·OneNote</Latin>，<Checked>请访问</Checked>·<DocLink $size={8} href="#onenote">www.onenote.com</DocLink>。<Return $c="#999" $gap={2}>↵</Return></Note>
        </Page>
      </WinCanvas>
      <Status $h={13} $pad="0 10px 0 11px" $bg="#e9e9e9" $line="#cfcfcf" $c="#444">
        <StatusText $w={54}>第 1 页，共 1 页</StatusText><StatusText $w={31}>80 个字</StatusText>
        <StatusText $w={18}><ScanText size={8} /></StatusText><StatusText $w={66}>简体中文(中国大陆)</StatusText>
        <StatusText $w={11}><Accessibility size={8} /></StatusText><StatusText $grow>辅助功能: 一切就绪</StatusText>
        <Row $gap={2}><ScanText size={8} />专注</Row>
        <Split $c="transparent" />
        <ViewButton $w={21} aria-label="阅读"><BookOpen size={8} /></ViewButton>
        <ViewButton $w={21} $on="#cfcfcf" aria-label="页面"><FileText size={8} /></ViewButton>
        <ViewButton $w={22} aria-label="Web"><Globe size={8} /></ViewButton>
        <ViewButton $w={11} aria-label="缩小"><Minus size={6} /></ViewButton>
        <Range $w={52} $thumb={5} $track="#888" $knob="#666" type="range" defaultValue="36" aria-label="缩放" />
        <ViewButton $w={14}>+</ViewButton><StatusText $w={16}>79%</StatusText>
      </Status>
    </WinWindow>
  );
}

const logoPaths = 'M78 108V70H42v66l38 38v100M70 166h84M115 32v102M115 70h37v70M188 62v112M225 270V70h38v64h-38M84 205h35v64M204 268h-50v-63h46v33h-42M262 165v112';

export default function App() {
  return (
    <Desktop>
      <Global />
      <Wallpaper aria-hidden="true">
        <defs>
          <pattern id="shards" width="46" height="12" patternUnits="userSpaceOnUse">
            <path d="M0 0h46v12H0z" fill="#cdbb45" />
            <path d="m2 0 8 1-3 4-8-1zM14 4l8-2 3 3-9 2zM28 0l7 1-2 4-7-2zM38 3l8-1-2 4-7 1zM1 8l5-2 2 4-6 2zM18 9l9-1-2 4h-8zM34 8l8 1-3 3z" fill="#6c5f17" />
          </pattern>
        </defs>
        <rect y="22" width="100%" height="104" fill="url(#shards)" />
        <path d="m0 314 5-2v5l-5 3zM0 322l4 1-4 3zM0 355l5-1v6l-5 1z" fill="#5d5316" />
      </Wallpaper>
      <MenuBar>
        <MenuList>
          <FaApple size={9} />
          <MenuItem $strong>微信</MenuItem>
          {['文件', '编辑', '显示', '窗口', '帮助'].map((t) => <MenuItem key={t}>{t}</MenuItem>)}
        </MenuList>
        <StatusIcons>
          <StatusSlot><FaQq size={9} /></StatusSlot>
          <StatusSlot $w={28}><FaWeixin size={11} />&nbsp;1</StatusSlot>
          <StatusSlot><Ringed>日</Ringed></StatusSlot>
          <StatusSlot><svg width="9" height="9" viewBox="0 0 9 9"><rect width="9" height="9" rx="1.500" /><path d="m1.500 3 1 2.500L4 3M2.500 5.500 2 7M7.500 1.500V6H5.500V3.500h2" stroke="#ddd37e" fill="none" strokeWidth=".8" /></svg></StatusSlot>
          <StatusSlot><svg width="9" height="8" viewBox="0 0 9 8"><path d="M1 0h7l1 3H0zM0 5h9v3H0z" fill="#3a3724" /><path d="M1 4h7" stroke="#4b62a8" /></svg></StatusSlot>
          <StatusSlot $w={22}><svg width="11" height="9" viewBox="0 0 11 9" fill="none" stroke="currentColor" strokeWidth=".9"><path d="M1.500.5h8v6h-8zM0 8.500h11" /><path d="M3.500 3.500H6v2H3.500zM6 2h2v2H6z" fill="currentColor" stroke="none" /></svg></StatusSlot>
          <StatusSlot $w={30}>56%<svg width="9" height="8" viewBox="0 0 9 8"><path d="M0 3h8q1 4-2 5H2Q0 6 0 3zM3 2l4-2" stroke="currentColor" /></svg></StatusSlot>
          <StatusSlot><History size={8} /></StatusSlot>
          <StatusSlot><CirclePlay size={9} /></StatusSlot>
          <StatusSlot $w={22}><svg width="12" height="9" viewBox="0 0 12 9"><rect width="12" height="9" rx="1.500" /><path d="M3.500 2v5M6 2v5M8.500 2v5M3 4.500h6" stroke="#ddd37e" strokeWidth=".8" /></svg></StatusSlot>
          <StatusSlot $w={24}><BatteryCharging size={13} /></StatusSlot>
          <StatusSlot><Wifi size={10} strokeWidth={3} /></StatusSlot>
          <StatusSlot $w={18}><Search size={8} /></StatusSlot>
          <StatusSlot $w={18}><svg width="8" height="8" viewBox="0 0 8 8" fill="none" stroke="currentColor" strokeWidth=".9"><rect x=".5" y=".5" width="7" height="3" rx="1.500" fill="currentColor" /><rect x=".5" y="4.800" width="7" height="2.700" rx="1.300" /><circle cx="6" cy="2" r="1" fill="#e2d982" stroke="none" /></svg><svg width="3" height="3"><circle cx="1.500" cy="1.500" r="1.500" fill="#6c52e0" /></svg></StatusSlot>
          <StatusSlot $w={51}>4月17日 周四</StatusSlot>
          <StatusSlot $w={22}>23:16</StatusSlot>
        </StatusIcons>
      </MenuBar>
      <WinWord />
      <MacWord />
      <Dock>
        {leftApps.map((a) => <DockApp key={a[0]} app={a} />)}
        <DockLine />
        {rightApps.map((a) => <DockApp key={a[0]} app={a} />)}
        <DockLine />
        <DockItem aria-label="下载">{art.files}</DockItem>
        <DockItem aria-label="废纸篓">{art.trash}</DockItem>
      </Dock>
      <Site>www.chiphell.com</Site>
      <Logo width="108" height="121" viewBox="0 0 324 363" fill="none" strokeLinejoin="round" strokeLinecap="round" aria-hidden="true">
        <g stroke="#6f6f6a" strokeWidth="25" opacity=".75"><path d={logoPaths} /><circle cx="188" cy="43" r="13" /><circle cx="262" cy="296" r="13" /></g>
        <g stroke="#f8f8f6" strokeWidth="18"><path d={logoPaths} /><circle cx="188" cy="43" r="14" strokeWidth="14" /><circle cx="262" cy="296" r="14" strokeWidth="14" stroke="#f4eebc" /></g>
      </Logo>
    </Desktop>
  );
}
